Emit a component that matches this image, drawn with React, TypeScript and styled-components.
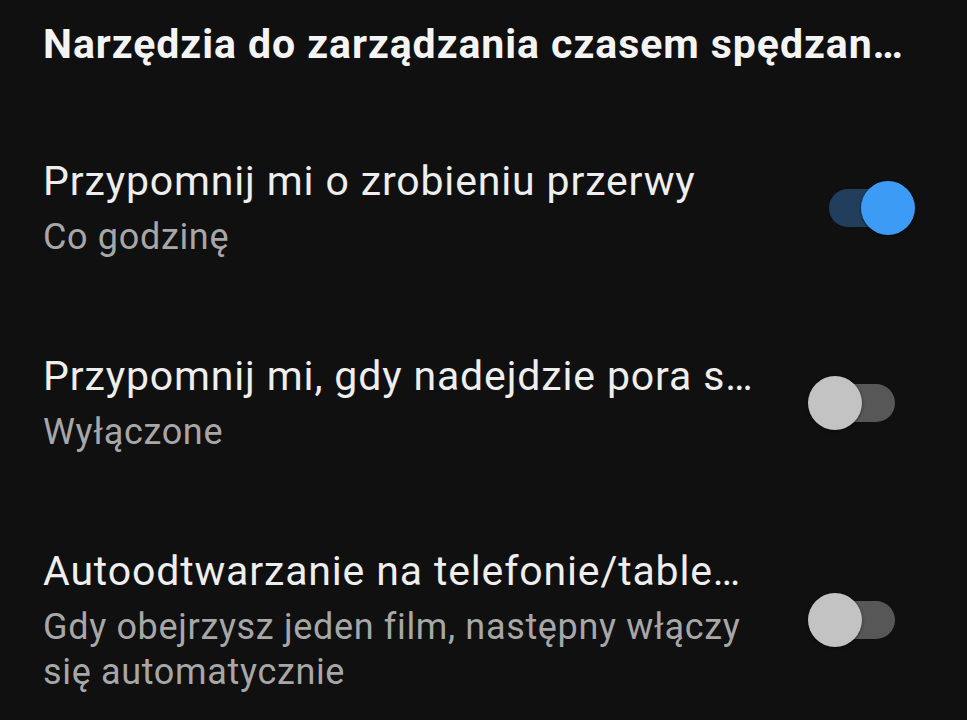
import { useState } from 'react';
import styled, { createGlobalStyle } from 'styled-components';

const GlobalStyle = createGlobalStyle`
  html, body {
    margin: 0;
    padding: 0;
    background: #101010;
  }
  body {
    font-family: Roboto, "Noto Sans", "Liberation Sans", sans-serif;
    -webkit-font-smoothing: antialiased;
  }
`;

const Screen = styled.div`
  width: 967px;
  height: 720px;
  overflow: hidden;
  background: #101010;
  padding: 18px 52px 0 43px;
  box-sizing: border-box;
`;

const Header = styled.h2`
  margin: 0 0 85px;
  font-size: 41px;
  line-height: 52px;
  font-weight: 700;
  letter-spacing: 0.95px;
  color: #f4f4f4;
  white-space: nowrap;
`;

const List = styled.div`
  display: flex;
  flex-direction: column;
  gap: 90px;
`;

const Row = styled.div`
  display: flex;
  align-items: center;
  justify-content: space-between;
  gap: 20px;
`;

const Texts = styled.div`
  display: flex;
  flex-direction: column;
  min-width: 0;
  flex: 1;
`;

const Title = styled.div`
  font-size: 41px;
  line-height: 52px;
  letter-spacing: 0.85px;
  color: #eeeeee;
  white-space: nowrap;
`;

const Subtitle = styled.div`
  margin-top: 8px;
  max-width: 715px;
  font-size: 36px;
  line-height: 45px;
  letter-spacing: 0.66px;
  color: #a7a7a7;
`;

const SwitchBox = styled.button<{ $on: boolean }>`
  position: relative;
  flex: none;
  width: 107px;
  height: 54px;
  padding: 0;
  border: none;
  background: transparent;
  cursor: pointer;
`;

const Track = styled.span<{ $on: boolean }>`
  position: absolute;
  left: 21px;
  right: 20px;
  top: 8px;
  height: 38px;
  border-radius: 19px;
  background: ${p => (p.$on ? '#213f5c' : '#575757')};
`;

const Knob = styled.span<{ $on: boolean }>`
  position: absolute;
  top: 0;
  left: ${p => (p.$on ? '53px' : '0')};
  width: 54px;
  height: 54px;
  border-radius: 50%;
  background: ${p => (p.$on ? '#3c9bf4' : '#c3c3c3')};
  box-shadow: 0 1px 3px rgba(0, 0, 0, 0.5);
  transition: left 0.15s;
`;

function Switch({ initial }: { initial: boolean }) {
  const [on, setOn] = useState(initial);
  return (
    <SwitchBox $on={on} onClick={() => setOn(!on)} aria-pressed={on}>
      <Track $on={on} />
      <Knob $on={on} />
    </SwitchBox>
  );
}

const settings = [
  {
    title: 'Przypomnij mi o zrobieniu przerwy',
    subtitle: 'Co godzinę',
    on: true,
  },
  {
    title: 'Przypomnij mi, gdy nadejdzie pora s…',
    subtitle: 'Wyłączone',
    on: false,
  },
  {
    title: 'Autoodtwarzanie na telefonie/table…',
    subtitle: 'Gdy obejrzysz jeden film, następny włączy się automatycznie',
    on: false,
  },
];

export default function App() {
  return (
    <>
      <GlobalStyle />
      <Screen>
        <Header>Narzędzia do zarządzania czasem spędzan…</Header>
        <List>
          {settings.map(({ title, subtitle, on }) => (
            <Row key={title}>
              <Texts>
                <Title>{title}</Title>
                <Subtitle>{subtitle}</Subtitle>
              </Texts>
              <Switch initial={on} />
            </Row>
          ))}
        </List>
      </Screen>
    </>
  );
}
